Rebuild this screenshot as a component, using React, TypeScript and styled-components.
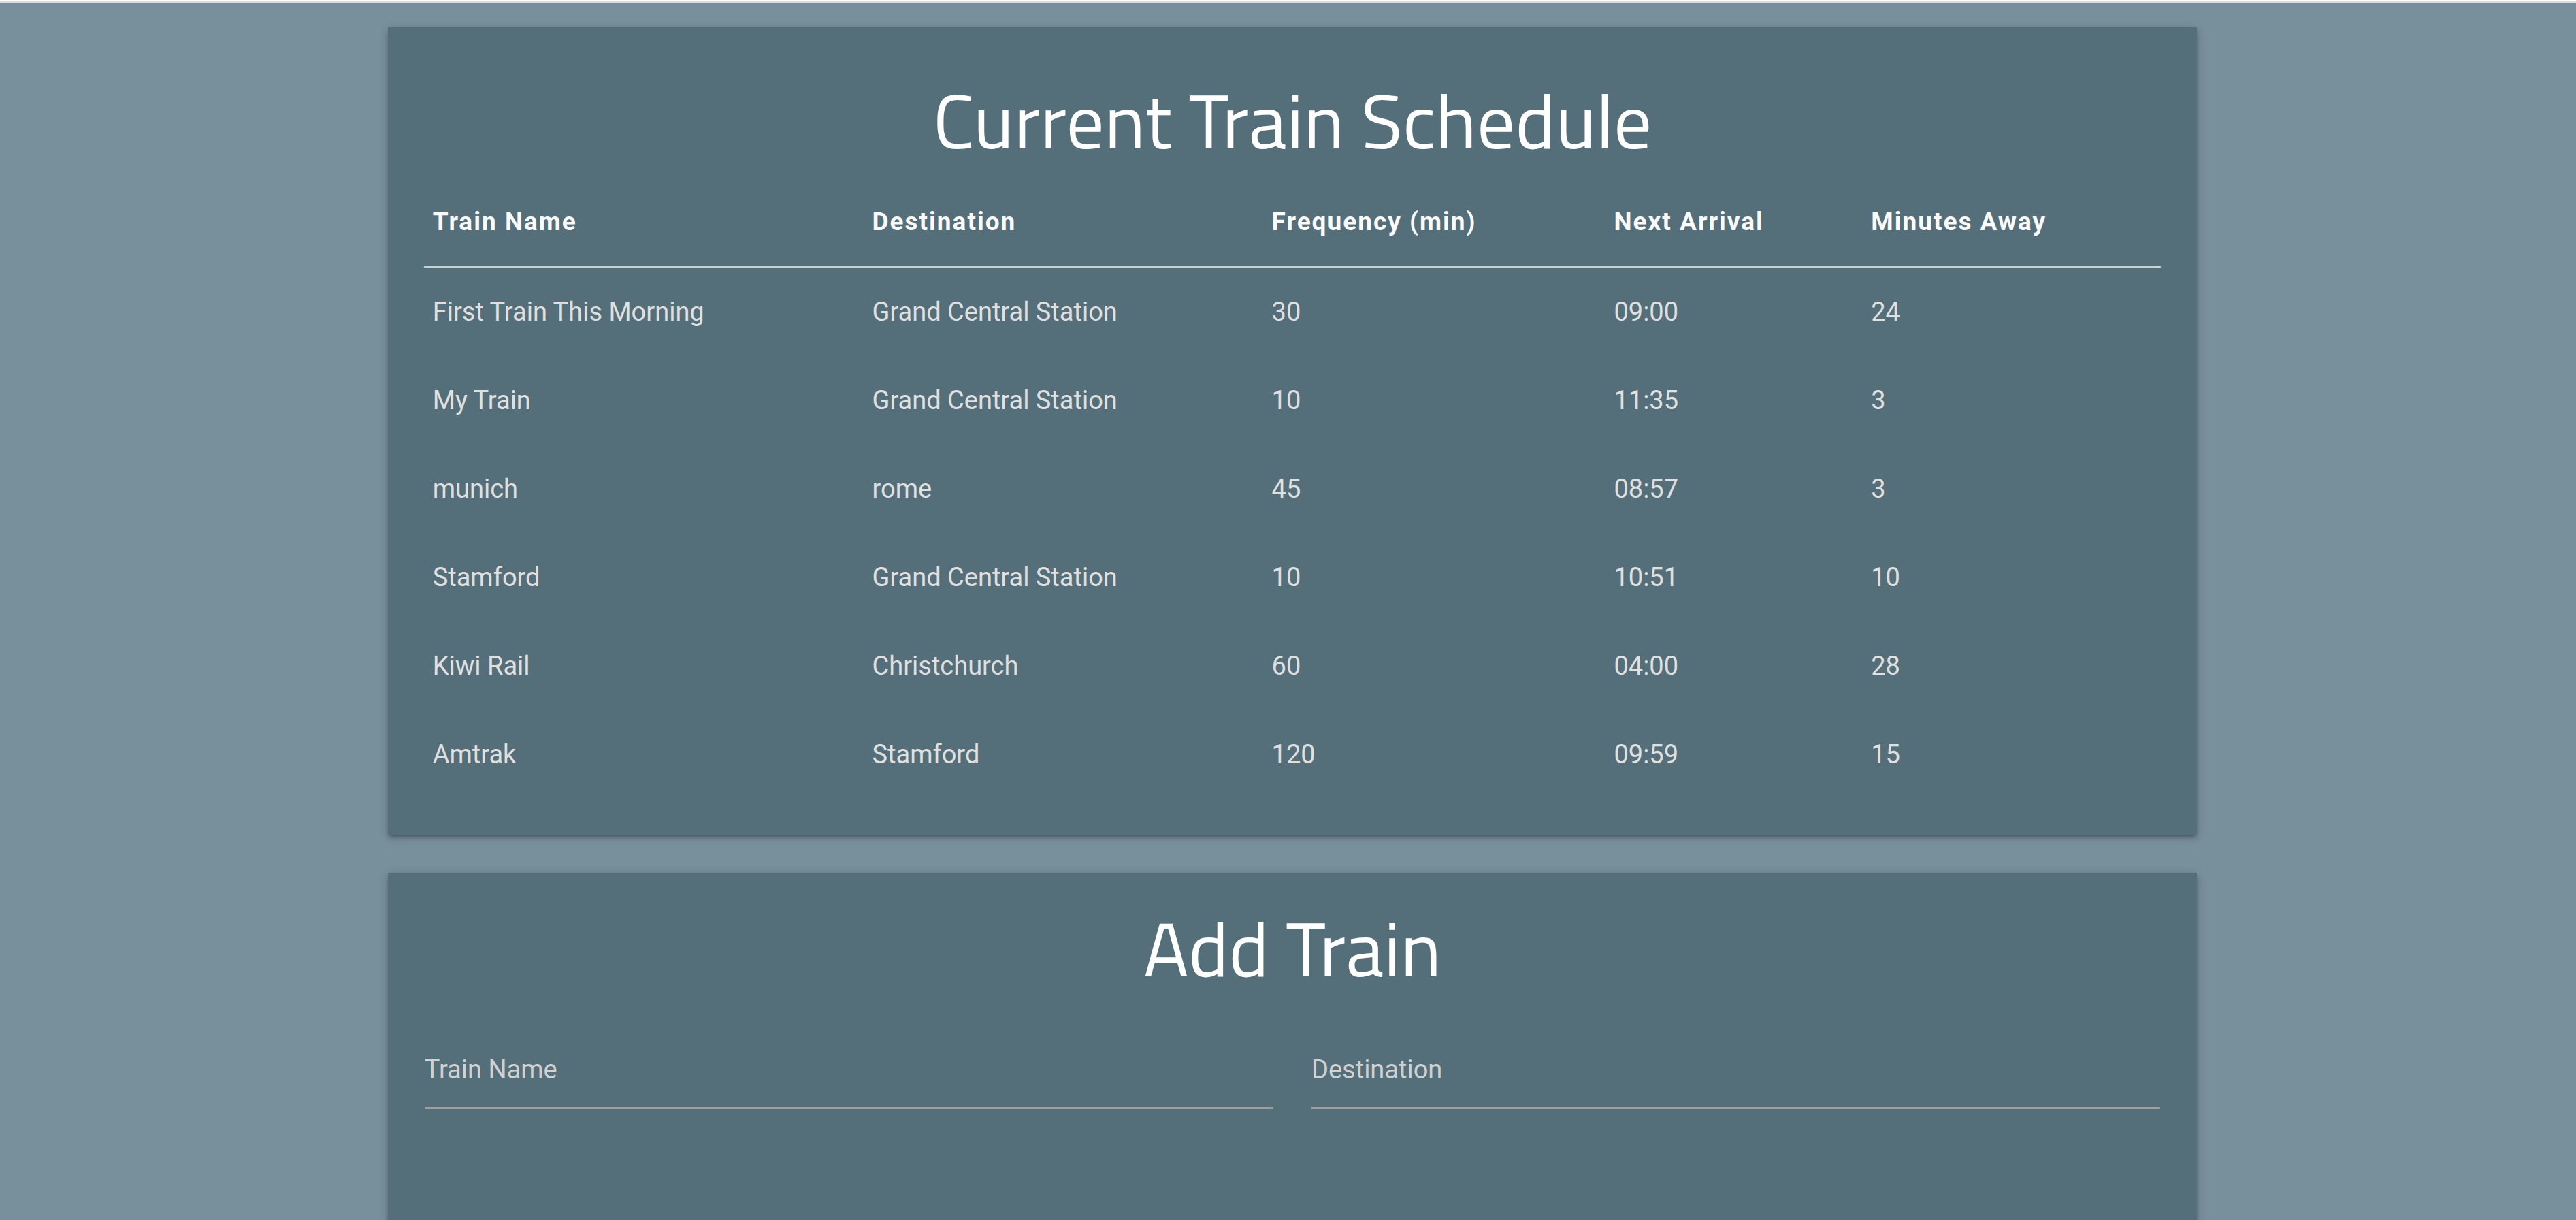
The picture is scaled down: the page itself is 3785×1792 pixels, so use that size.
import React, { useState } from "react";
import styled, { createGlobalStyle } from "styled-components";

const GlobalStyle = createGlobalStyle`
  *, *::before, *::after {
    box-sizing: border-box;
  }

  body {
    margin: 0;
    background: #78909c;
    color: #fff;
    font-family: Roboto, "Liberation Sans", sans-serif;
    font-size: 38px;
    line-height: 52px;
    overflow-x: hidden;
  }
`;

const TopBar = styled.header`
  height: 5px;
  background: #fff;
  border-bottom: 3px solid #dcdce0;
`;

const Page = styled.main`
  width: calc(100% + 13px);
  padding-top: 35px;
`;

const Container = styled.div`
  display: flex;
  flex-direction: column;
  gap: 56px;
  width: 70%;
  margin: 0 auto;
`;

const Card = styled.section`
  padding: 53px;
  background: #546e7a;
  box-shadow:
    0 5px 5px 0 rgba(0, 0, 0, 0.14),
    0 8px 3px -5px rgba(0, 0, 0, 0.12),
    0 3px 13px 0 rgba(0, 0, 0, 0.2);
`;

const Title = styled.h1<{ $spaced?: boolean }>`
  margin: 0;
  padding: ${(p) => (p.$spaced ? "26px 0 28px" : "0 0 51px")};
  font-family: "Titillium Web", Roboto, sans-serif;
  font-size: 112px;
  font-weight: 400;
  line-height: 114px;
  text-align: center;
`;

const Table = styled.table`
  width: 100%;
  table-layout: fixed;
  border-collapse: collapse;
  text-align: left;
`;

const Head = styled.thead`
  border-bottom: 2px solid #d0d0d0;
`;

const HeadCell = styled.th<{ $width: string }>`
  width: ${(p) => p.$width};
  padding: 39px 13px;
  color: #fafafa;
  font-size: 37px;
  font-weight: 700;
  letter-spacing: 2px;
`;

const Cell = styled.td`
  padding: 39px 13px;
  color: #e0e0e0;
`;

const Form = styled.form`
  display: grid;
  grid-template-columns: 1fr 1fr;
  column-gap: 56px;
  padding: 0 1px;
`;

const Field = styled.div`
  display: grid;
  padding-bottom: 130px;
`;

const Label = styled.label`
  grid-area: 1 / 1;
  align-self: center;
  justify-self: start;
  padding-top: 13px;
  color: #d1d1d1;
  cursor: text;
`;

const Input = styled.input`
  grid-area: 1 / 1;
  width: 100%;
  height: 129px;
  padding: 13px 0 0;
  border: 0;
  border-bottom: 3px solid #9e9e9e;
  border-radius: 0;
  outline: 0;
  background: transparent;
  color: #fff;
  font: inherit;
`;

const columns = [
  { name: "Train Name", width: "25.3%" },
  { name: "Destination", width: "23%" },
  { name: "Frequency (min)", width: "19.7%" },
  { name: "Next Arrival", width: "14.8%" },
  { name: "Minutes Away", width: "17.2%" },
];

const trains = [
  ["First Train This Morning", "Grand Central Station", "30", "09:00", "24"],
  ["My Train", "Grand Central Station", "10", "11:35", "3"],
  ["munich", "rome", "45", "08:57", "3"],
  ["Stamford", "Grand Central Station", "10", "10:51", "10"],
  ["Kiwi Rail", "Christchurch", "60", "04:00", "28"],
  ["Amtrak", "Stamford", "120", "09:59", "15"],
];

function TextField({ id, label }: { id: string; label: string }) {
  const [value, setValue] = useState("");
  return (
    <Field>
      <Input id={id} type="text" value={value} onChange={(e) => setValue(e.target.value)} />
      <Label htmlFor={id} hidden={value !== ""}>
        {label}
      </Label>
    </Field>
  );
}

export default function App() {
  return (
    <>
      <GlobalStyle />
      <TopBar />
      <Page>
        <Container>
          <Card>
            <Title $spaced>Current Train Schedule</Title>
            <Table>
              <Head>
                <tr>
                  {columns.map((column) => (
                    <HeadCell key={column.name} scope="col" $width={column.width}>
                      {column.name}
                    </HeadCell>
                  ))}
                </tr>
              </Head>
              <tbody>
                {trains.map((train) => (
                  <tr key={train[0]}>
                    {train.map((text, i) => (
                      <Cell key={i}>{text}</Cell>
                    ))}
                  </tr>
                ))}
              </tbody>
            </Table>
          </Card>
          <Card>
            <Title>Add Train</Title>
            <Form>
              <TextField id="train-name" label="Train Name" />
              <TextField id="destination" label="Destination" />
            </Form>
          </Card>
        </Container>
      </Page>
    </>
  );
}
